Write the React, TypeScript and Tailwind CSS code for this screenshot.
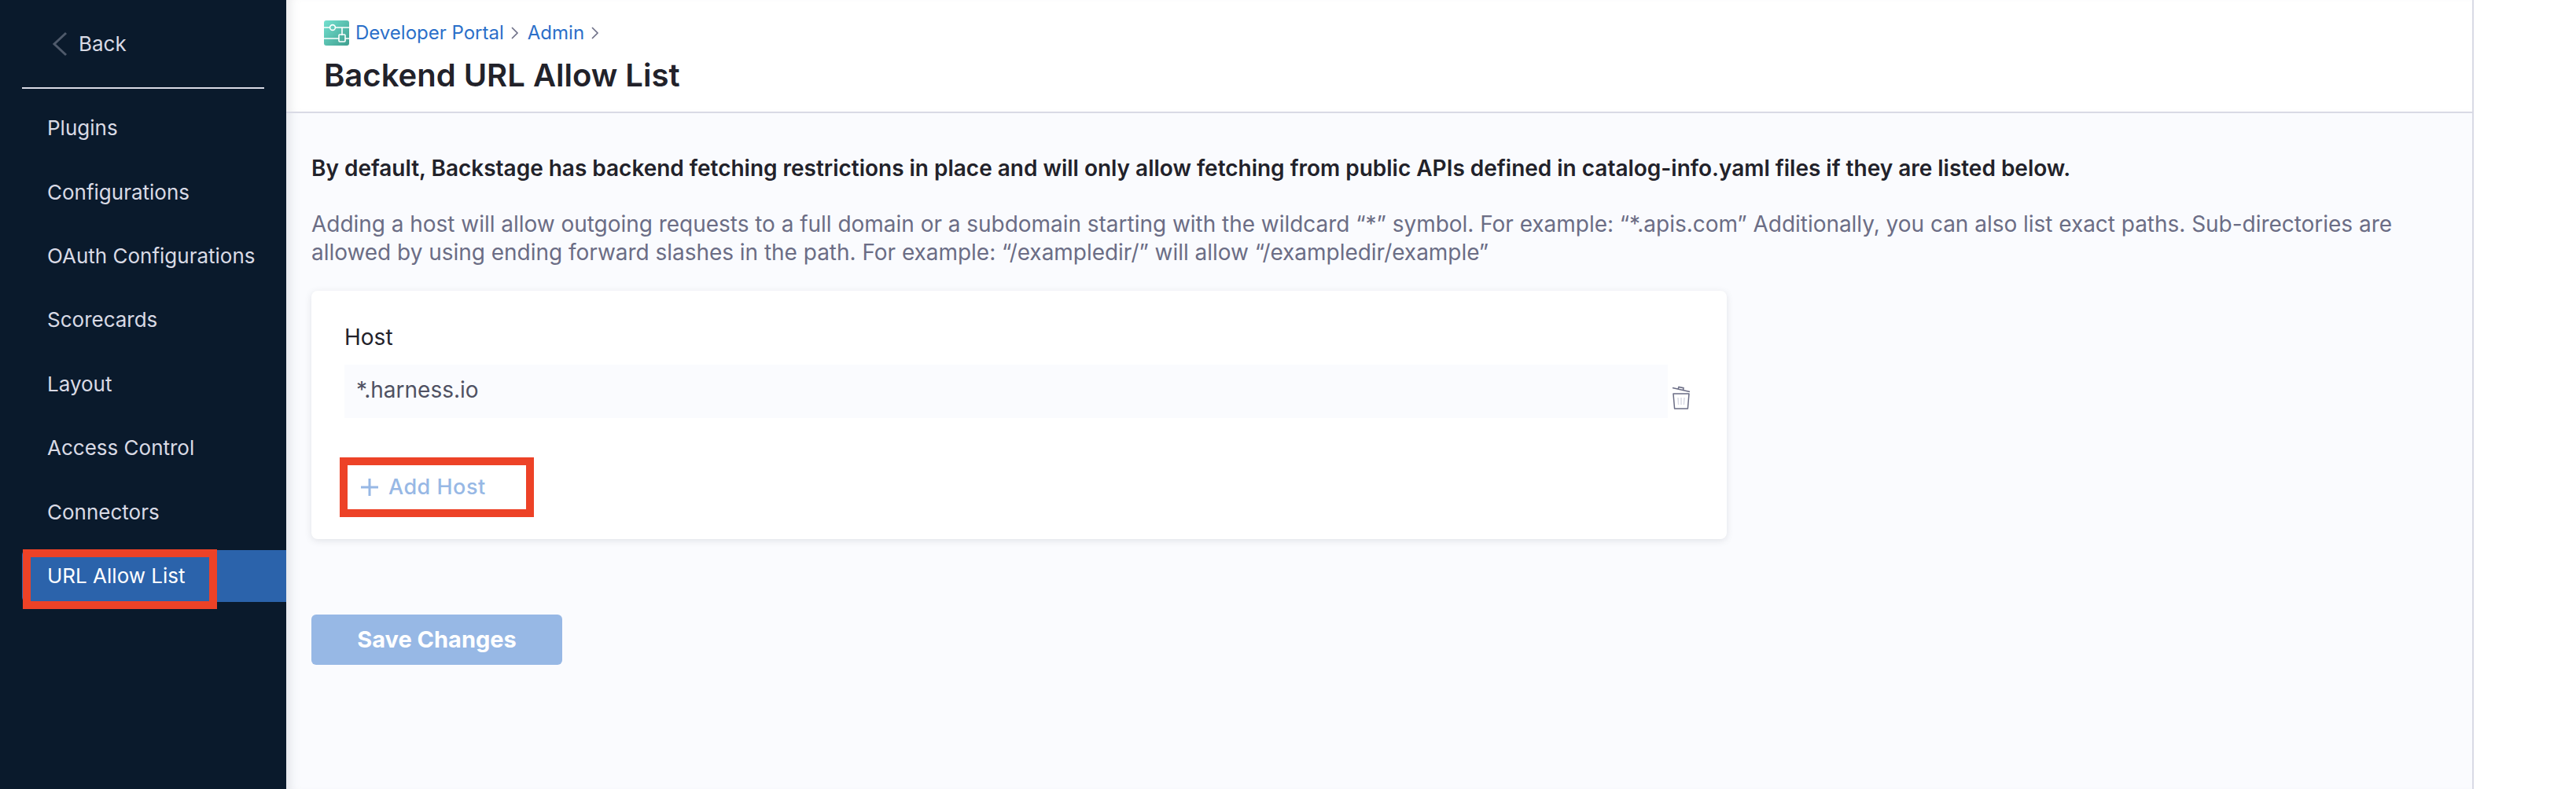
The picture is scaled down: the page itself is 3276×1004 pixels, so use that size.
import React from "react"

const NAV_ITEMS = [
  "Plugins",
  "Configurations",
  "OAuth Configurations",
  "Scorecards",
  "Layout",
  "Access Control",
  "Connectors",
  "URL Allow List",
]

// Breadcrumb chevron
const Chevron = () => (
  <svg width="11" height="18" viewBox="0 0 11 18" fill="none" stroke="#6b6d85" strokeWidth="1.6">
    <path d="M2 2l7 7-7 7" />
  </svg>
)

const PortalLogo = () => (
  <svg width="32" height="32" viewBox="0 0 32 32">
    <defs>
      <linearGradient id="logoFill" x1="0" y1="0" x2="1" y2="1">
        <stop offset="0" stopColor="#73e0cf" />
        <stop offset="1" stopColor="#3f9f8f" />
      </linearGradient>
    </defs>
    <rect width="32" height="32" rx="3" fill="url(#logoFill)" />
    <path d="M0 9h7M15 9h17M0 23h19M27 23h5M23 9v10" stroke="#fff" strokeWidth="1.6" fill="none" />
    <circle cx="11" cy="9" r="3.4" stroke="#fff" strokeWidth="1.6" fill="none" />
    <rect x="19" y="18" width="8" height="9" rx="1" stroke="#fff" strokeWidth="1.6" fill="none" />
  </svg>
)

const TrashIcon = () => (
  <svg width="24" height="30" viewBox="0 0 24 30" fill="none" stroke="#6b6d85" strokeWidth="1.5">
    <path d="M1 2.5l22 5" />
    <path d="M8 4l1-2.6 6 1.3-.4 2.6" />
    <path d="M2 10h20l-1.6 19H3.6z" strokeLinejoin="round" />
    <path d="M8 15l.6 9M12 15v9M16 15l-.6 9" stroke="#d9dae5" />
  </svg>
)

const Sidebar = () => (
  <aside className="w-[364px] shrink-0 bg-[#0a1a2c] text-[26px] text-[#d9dae5]">
    <div className="flex h-[111px] items-center gap-[14px] pl-[66px]">
      <svg width="20" height="32" viewBox="0 0 20 32" fill="none" stroke="#4f5a6b" strokeWidth="3">
        <path d="M18 2L3 16l15 14" />
      </svg>
      <span>Back</span>
    </div>
    <div className="mx-[28px] h-[2px] bg-[#d9dae5]" />
    <nav className="mt-[9px] flex flex-col">
      {NAV_ITEMS.map((item) => {
        const active = item === "URL Allow List"
        return (
          <div
            key={item}
            className={`relative flex h-[81.4px] items-center pl-[60px] ${active ? "text-white" : ""}`}
          >
            {active && (
              <>
                <div className="absolute inset-x-0 top-[8px] ml-[28px] h-[66px] rounded-l-[6px] bg-[#2b63ab]" />
                <div className="absolute left-[29px] top-[7px] h-[76px] w-[247px] border-[10px] border-[#ed4227]" />
              </>
            )}
            <span className="relative">{item}</span>
          </div>
        )
      })}
    </nav>
  </aside>
)

const HostCard = () => (
  <div className="mt-[31px] h-[316px] w-[1800px] rounded-[8px] bg-white pl-[42px] pr-[46px] pt-[41px] shadow-[0_2px_8px_rgba(96,97,112,0.16)]">
    <div className="text-[28px] leading-[36px] text-[#22222a]">Host</div>
    <div className="mt-[17px] flex items-start">
      <div className="flex h-[68px] flex-1 items-center bg-[#fafbfe] pl-[15px] pb-[4px] text-[28px] text-[#4f5162]">
        *.harness.io
      </div>
      <div className="ml-[5px] mt-[27px]">
        <TrashIcon />
      </div>
    </div>
    <button className="-ml-[6px] mt-[50px] flex h-[76px] w-[247px] items-center gap-[12px] border-[10px] border-[#ed4227] bg-white pl-[16px] text-[27px] font-medium tracking-[0.5px] text-[#97b8e5]">
      <svg width="24" height="24" viewBox="0 0 24 24" fill="none" stroke="#97b8e5" strokeWidth="3">
        <path d="M12 1v22M1 12h22" />
      </svg>
      Add Host
    </button>
  </div>
)

const App = () => {
  return (
    <div className="flex h-[1004px] w-[3276px] overflow-hidden bg-white font-['Inter',sans-serif]">
      <Sidebar />
      <div className="flex w-[2782px] shrink-0 flex-col border-r-2 border-[#d9dae5] bg-[#fafbfe] shadow-[inset_14px_0_14px_-10px_rgba(96,97,112,0.16)]">
        <header className="h-[144px] border-b-2 border-[#d9dae5] bg-white pl-[48px] pt-[26px] shadow-[inset_14px_0_14px_-10px_rgba(96,97,112,0.16)]">
          <div className="flex h-[32px] items-center gap-[8px] text-[24px] text-[#2b6fc9]">
            <PortalLogo />
            <span>Developer Portal</span>
            <Chevron />
            <span className="ml-[3px]">Admin</span>
            <Chevron />
          </div>
          <h1 className="mt-[13px] text-[40px] font-semibold leading-[50px] text-[#22222a]">Backend URL Allow List</h1>
        </header>
        <main className="pl-[32px] pt-[50px]">
          <p className="text-[28px] font-semibold leading-[40px] tracking-[-0.015px] text-[#22222a]">
            By default, Backstage has backend fetching restrictions in place and will only allow fetching from public APIs defined in catalog-info.yaml files if they are listed below.
          </p>
          <p className="mt-[33px] w-[2720px] text-[28px] leading-[36px] tracking-[-0.03px] text-[#6b6d85]">
            Adding a host will allow outgoing requests to a full domain or a subdomain starting with the wildcard “*” symbol. For example: “*.apis.com” Additionally, you can also list exact paths. Sub-directories are allowed by using ending forward slashes in the path. For example: “/exampledir/” will allow “/exampledir/example”
          </p>
          <HostCard />
          <button className="mt-[96px] flex h-[64px] w-[319px] items-center justify-center rounded-[6px] bg-[#97b8e5] text-[29px] font-bold text-white">
            Save Changes
          </button>
        </main>
      </div>
    </div>
  )
}

export default App
